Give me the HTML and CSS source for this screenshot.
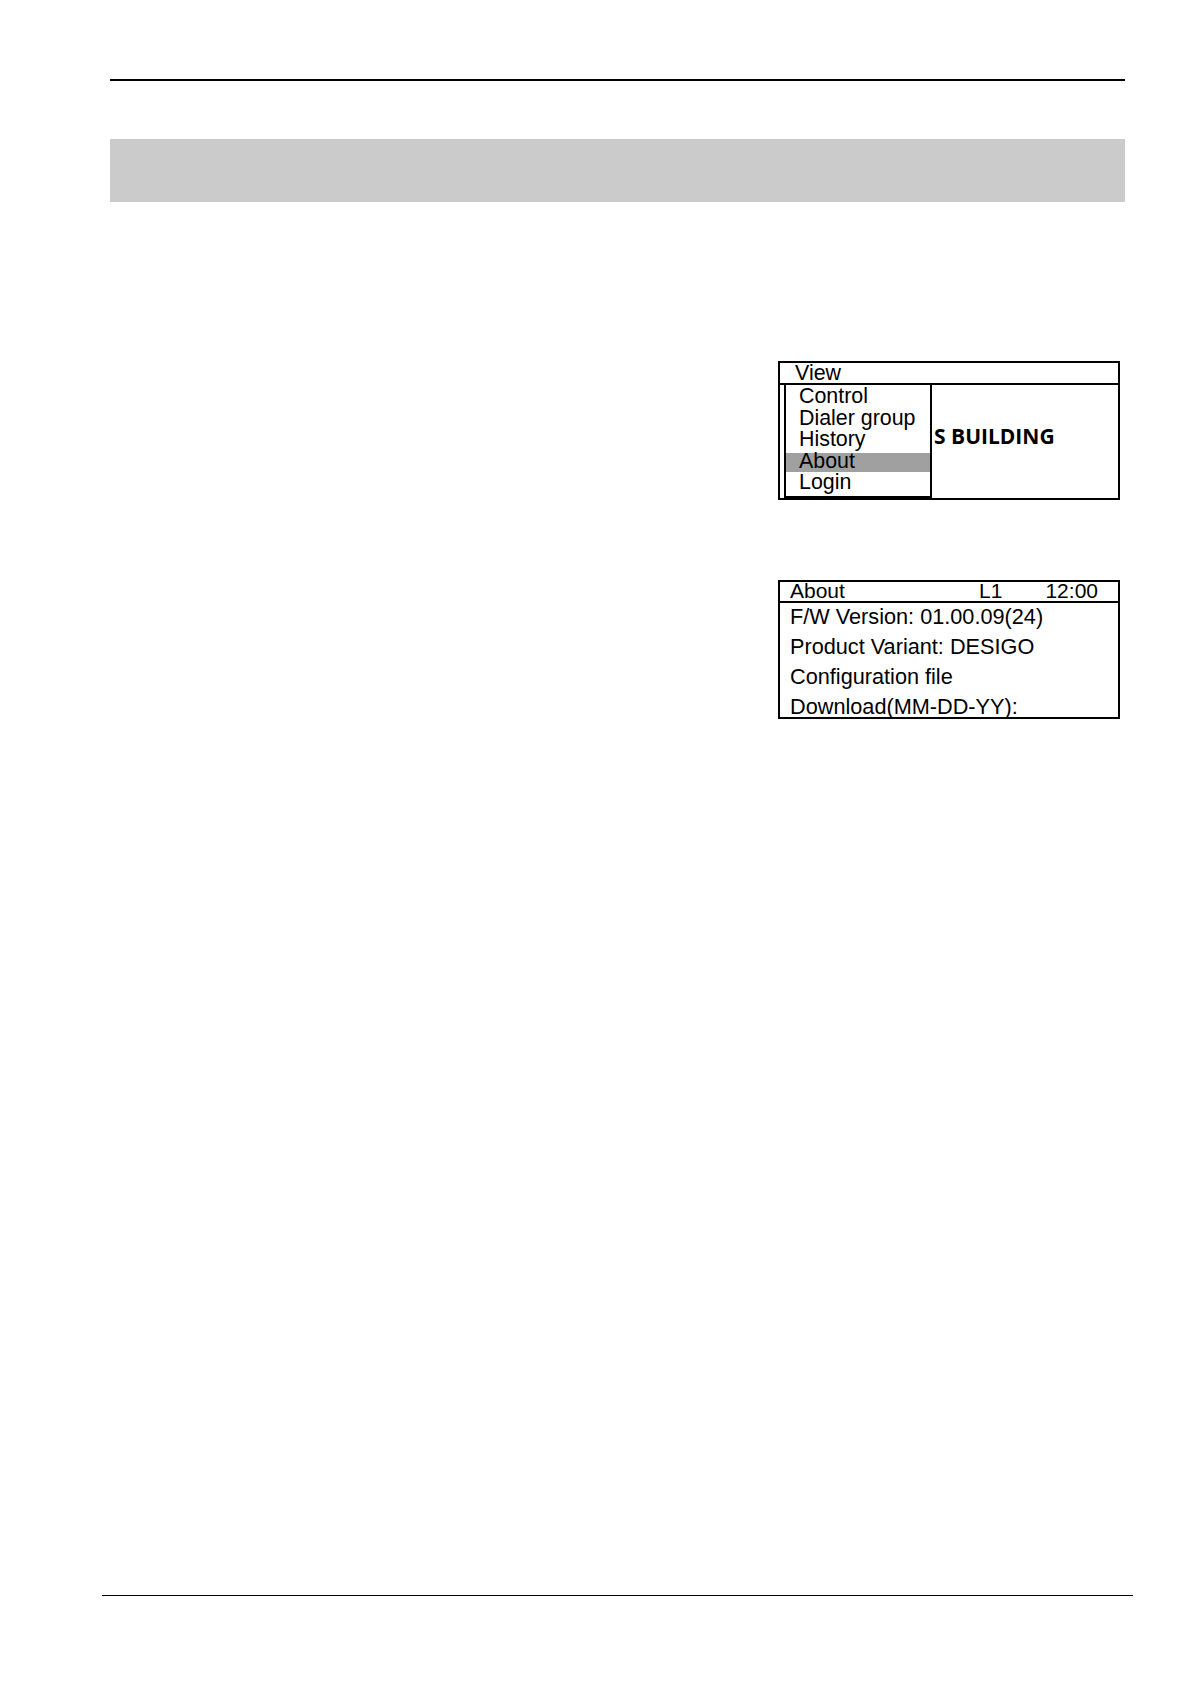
FILE: index.html
```html
<!DOCTYPE html>
<html>
<head>
<meta charset="utf-8">
<link rel="stylesheet" href="styles.css">
</head>
<body>
<div class="page">
  <div class="top-rule"></div>
  <div class="banner"></div>
  <div class="figures">
    <div class="lcd lcd-menu">
      <div class="lcd-head head-view">View</div>
      <div class="lcd-body menu-body">
        <ul class="menu">
          <li class="menu-item">Control</li>
          <li class="menu-item">Dialer group</li>
          <li class="menu-item">History</li>
          <li class="menu-item is-selected">About</li>
          <li class="menu-item">Login</li>
        </ul>
        <div class="building">S BUILDING</div>
      </div>
    </div>
    <div class="lcd lcd-about">
      <div class="lcd-head head-about">
        <span class="head-title">About</span>
        <span class="head-level">L1</span>
        <span class="head-time">12:00</span>
      </div>
      <div class="lcd-body about-body">
        <div class="about-line">F/W Version: 01.00.09(24)</div>
        <div class="about-line">Product Variant: DESIGO</div>
        <div class="about-line">Configuration file</div>
        <div class="about-line">Download(MM-DD-YY):</div>
      </div>
    </div>
  </div>
  <div class="spacer"></div>
  <div class="bottom-rule"></div>
</div>
</body>
</html>
```
FILE: styles.css
```css
html, body {
  margin: 0;
  padding: 0;
  background: #ffffff;
}

.page {
  height: 1684px;
  display: flex;
  flex-direction: column;
  font-family: "Liberation Sans", Arial, sans-serif;
  color: #000;
}

.top-rule {
  margin: 79px 65px 0 110px;
  height: 1.5px;
  background: #000;
}

.banner {
  margin: 58.5px 65px 0 110px;
  height: 63px;
  background: #cbcbcb;
}

.figures {
  margin: 159px 0 0 778px;
  width: 342px;
  display: flex;
  flex-direction: column;
  gap: 80px;
}

.lcd {
  box-sizing: border-box;
  width: 342px;
  border: 2px solid #000;
  display: flex;
  flex-direction: column;
}

.lcd-menu {
  height: 139px;
}

.lcd-about {
  height: 139px;
}

.lcd-head {
  box-sizing: content-box;
  border-bottom: 2px solid #000;
  white-space: nowrap;
}

.head-view {
  height: 20px;
  line-height: 20px;
  font-size: 21.4px;
  padding-left: 15px;
}

.head-about {
  height: 19px;
  line-height: 18px;
  font-size: 21px;
  display: flex;
  padding-left: 10px;
  padding-right: 20px;
}

.head-title {
  flex: 1;
}

.head-time {
  margin-left: 43px;
}

.lcd-body {
  flex: 1;
  min-height: 0;
}

.menu-body {
  display: flex;
  align-items: stretch;
}

.menu {
  list-style: none;
  margin: 0 0 0 4px;
  padding: 0;
  width: 148px;
  box-sizing: border-box;
  border: 2px solid #000;
  border-top: 0;
}

.menu-item {
  font-size: 21.4px;
  line-height: 21.6px;
  height: 21.6px;
  padding-left: 13px;
  white-space: nowrap;
}

.menu-item:first-child {
  margin-top: 1px;
}

.menu-item.is-selected {
  background: linear-gradient(to bottom, transparent 2px, #a0a0a0 2px, #a0a0a0 21px, transparent 21px);
}

.building {
  margin: 40px 0 0 2px;
  font-family: "Open Sans", "Noto Sans", sans-serif;
  font-weight: 700;
  font-size: 21px;
  line-height: 22px;
  white-space: nowrap;
}

.about-body {
  padding-left: 10px;
  overflow: hidden;
}

.about-line {
  font-size: 21.7px;
  line-height: 30px;
  white-space: nowrap;
}

.about-line:first-child {
  margin-top: -1px;
}

.spacer {
  flex: 1;
}

.bottom-rule {
  margin: 0 57px 88px 102px;
  height: 1.5px;
  background: #000;
}
```
